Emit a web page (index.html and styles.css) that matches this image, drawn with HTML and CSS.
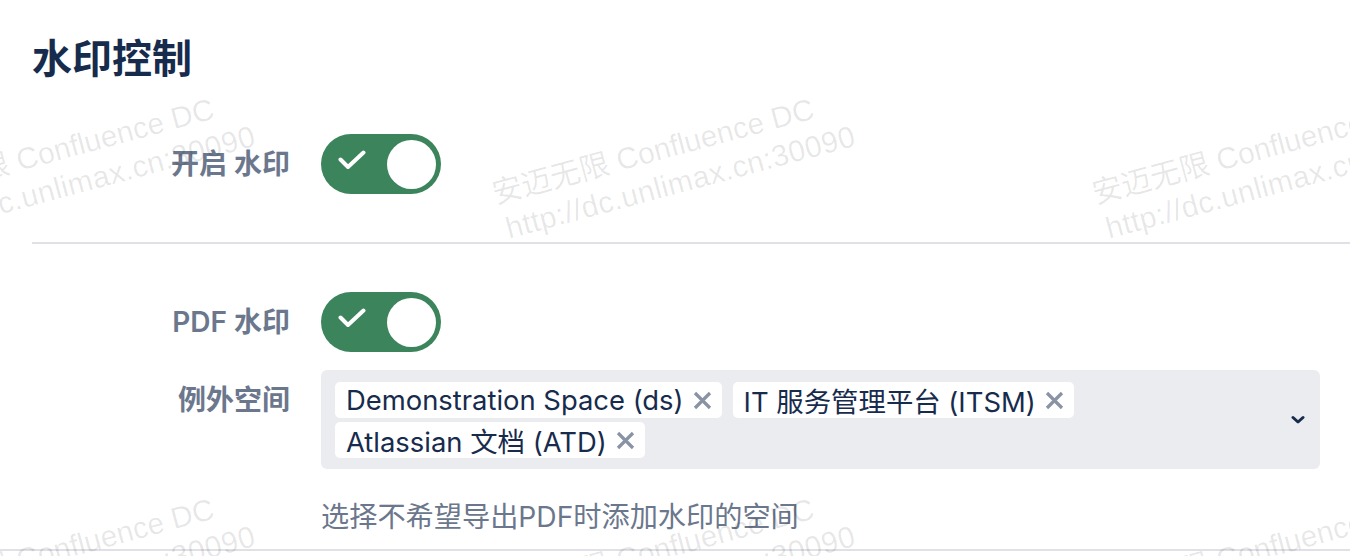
FILE: index.html
```html
<!DOCTYPE html>
<html lang="zh-CN">
<head>
<meta charset="utf-8">
<title>水印控制</title>
<link rel="stylesheet" href="styles.css">
</head>
<body>
<div class="page">
  <h1 class="title">水印控制</h1>

  <div class="row row-first">
    <label class="label">开启 水印</label>
    <div class="field">
      <span class="toggle">
        <svg class="check" width="28" height="20" viewBox="0 0 28 20"><polyline points="2.5,9.5 10,17 25.5,2.5" fill="none" stroke="#fff" stroke-width="4" stroke-linecap="round" stroke-linejoin="round"/></svg>
        <span class="knob"></span>
      </span>
    </div>
  </div>

  <hr class="divider">

  <div class="row row-pdf">
    <label class="label">PDF 水印</label>
    <div class="field">
      <span class="toggle">
        <svg class="check" width="28" height="20" viewBox="0 0 28 20"><polyline points="2.5,9.5 10,17 25.5,2.5" fill="none" stroke="#fff" stroke-width="4" stroke-linecap="round" stroke-linejoin="round"/></svg>
        <span class="knob"></span>
      </span>
    </div>
  </div>

  <div class="row row-select">
    <label class="label label-top">例外空间</label>
    <div class="field">
      <div class="select">
        <div class="tags">
          <span class="tag">Demonstration Space (ds)<svg class="x" width="19" height="19" viewBox="0 0 19 19"><path d="M2 2L17 17M17 2L2 17" stroke="#8993a4" stroke-width="3.2"/></svg></span>
          <span class="tag">IT 服务管理平台 (ITSM)<svg class="x" width="19" height="19" viewBox="0 0 19 19"><path d="M2 2L17 17M17 2L2 17" stroke="#8993a4" stroke-width="3.2"/></svg></span>
          <span class="tag">Atlassian 文档 (ATD)<svg class="x" width="19" height="19" viewBox="0 0 19 19"><path d="M2 2L17 17M17 2L2 17" stroke="#8993a4" stroke-width="3.2"/></svg></span>
        </div>
        <svg class="chevron" width="14" height="10" viewBox="0 0 14 10"><polyline points="2,2.5 7,7 12,2.5" fill="none" stroke="#172b4d" stroke-width="3" stroke-linecap="round" stroke-linejoin="round"/></svg>
      </div>
      <div class="help">选择不希望导出PDF时添加水印的空间</div>
    </div>
  </div>
</div>
<hr class="divider divider-bottom">

<div class="watermarks">
  <div class="wm-grid">
    <div class="wm-tile"><div class="wm"><div>安迈无限 Confluence DC</div><div class="wm-url">http://dc.unlimax.cn:30090</div></div></div>
    <div class="wm-tile"><div class="wm"><div>安迈无限 Confluence DC</div><div class="wm-url">http://dc.unlimax.cn:30090</div></div></div>
    <div class="wm-tile"><div class="wm"><div>安迈无限 Confluence DC</div><div class="wm-url">http://dc.unlimax.cn:30090</div></div></div>
    <div class="wm-tile"><div class="wm"><div>安迈无限 Confluence DC</div><div class="wm-url">http://dc.unlimax.cn:30090</div></div></div>
    <div class="wm-tile"><div class="wm"><div>安迈无限 Confluence DC</div><div class="wm-url">http://dc.unlimax.cn:30090</div></div></div>
    <div class="wm-tile"><div class="wm"><div>安迈无限 Confluence DC</div><div class="wm-url">http://dc.unlimax.cn:30090</div></div></div>
  </div>
</div>
</body>
</html>
```

FILE: styles.css
```css
html, body {
  margin: 0;
  padding: 0;
  background: #fff;
}
body {
  width: 1350px;
  height: 556px;
  overflow: hidden;
  position: relative;
  font-family: "Inter", "Noto Sans CJK SC", sans-serif;
  color: #172b4d;
}
.page {
  padding: 0 30px 0 32px;
}
.title {
  margin: 0;
  padding-top: 32px;
  font-family: "Noto Sans CJK SC", sans-serif;
  font-size: 40px;
  line-height: 48px;
  font-weight: 700;
  color: #172b4d;
}
.row {
  display: grid;
  grid-template-columns: 258px 1fr;
  column-gap: 31px;
  align-items: center;
}
.row-first {
  margin-top: 54px;
}
.row-pdf {
  margin-top: 48px;
}
.row-select {
  margin-top: 18px;
  align-items: start;
}
.label {
  text-align: right;
  font-family: "Inter", "Noto Sans CJK SC", sans-serif;
  font-size: 28px;
  line-height: 36px;
  font-weight: 600;
  color: #6b778c;
}
.label-top {
  margin-top: 12px;
}
.field {
  min-width: 0;
}
.toggle {
  display: flex;
  align-items: center;
  box-sizing: border-box;
  width: 120px;
  height: 60px;
  border-radius: 30px;
  background: #3b845c;
  padding: 0 5px 0 17px;
}
.check {
  display: block;
  margin-top: -9px;
}
.knob {
  margin-left: auto;
  width: 49px;
  height: 49px;
  border-radius: 50%;
  background: #fff;
}
.divider {
  margin: 48px -30px 0 0;
  border: 0;
  height: 2px;
  background: #dfe1e6;
}
.divider-bottom {
  margin: 14px 0 0 0;
}
.select {
  display: flex;
  align-items: center;
  min-height: 99px;
  box-sizing: border-box;
  padding: 12px 14px 11px 14px;
  background: #ebecf0;
  border-radius: 6px;
}
.tags {
  flex: 1;
  display: flex;
  flex-wrap: wrap;
  gap: 4px 11px;
  align-content: flex-start;
  align-self: flex-start;
}
.tag {
  display: inline-flex;
  align-items: center;
  gap: 9px;
  height: 36px;
  padding: 0 10px 0 11px;
  background: #fff;
  border-radius: 5px;
  font-size: 27.4px;
  color: #172b4d;
  white-space: nowrap;
}
.tag .x {
  display: block;
}
.chevron {
  display: block;
  margin: 0 0 0 12px;
  flex: none;
  position: relative;
  left: -1px;
}
.help {
  margin-top: 30px;
  font-family: "Inter", "Noto Sans CJK SC", sans-serif;
  font-size: 28.2px;
  line-height: 36px;
  color: #6b778c;
}
.watermarks {
  position: absolute;
  inset: 0;
  overflow: hidden;
  pointer-events: none;
}
.wm-grid {
  display: grid;
  grid-template-columns: repeat(3, 600px);
  grid-auto-rows: 400px;
  margin-left: -112px;
  margin-top: 176px;
}
.wm {
  transform: rotate(-15deg);
  transform-origin: 0 0;
  font-family: "Liberation Sans", "Noto Sans CJK SC", sans-serif;
  font-size: 30px;
  line-height: 37px;
  color: rgba(0, 0, 0, 0.095);
  white-space: nowrap;
}
.wm-url {
  padding-left: 4px;
  letter-spacing: 0.4px;
}
```
